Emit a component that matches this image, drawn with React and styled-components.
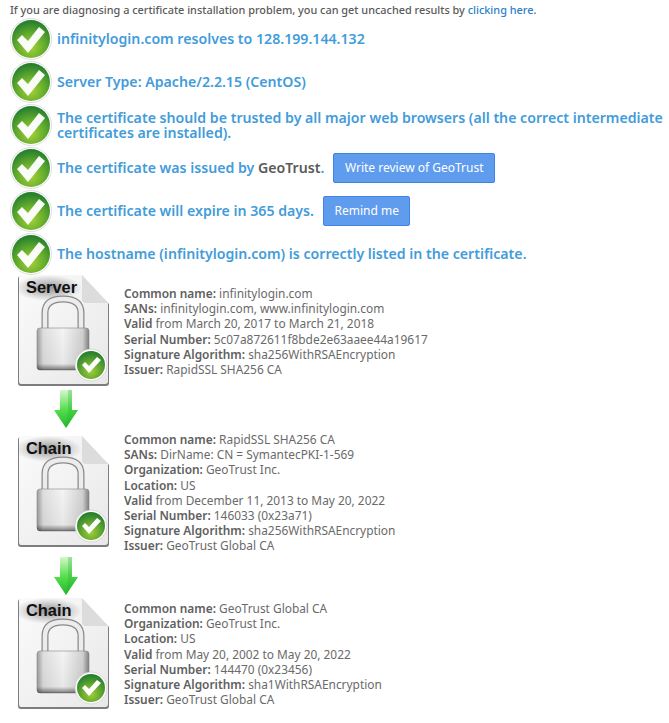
import React from 'react'
import styled, { createGlobalStyle } from 'styled-components'

const rows = [
  { id: 1, text: 'infinitylogin.com resolves to 128.199.144.132' },
  { id: 2, text: 'Server Type: Apache/2.2.15 (CentOS)' },
  { id: 3, text: 'The certificate should be trusted by all major web browsers (all the correct intermediate certificates are installed).' },
  { id: 4, text: 'The certificate was issued by ', brand: 'GeoTrust', tail: '.', button: 'Write review of GeoTrust' },
  { id: 5, text: 'The certificate will expire in 365 days.', button: 'Remind me' },
  { id: 6, text: 'The hostname (infinitylogin.com) is correctly listed in the certificate.' }
]

const certs = [
  {
    label: 'Server',
    fields: [
      ['Common name:', ' infinitylogin.com'],
      ['SANs:', ' infinitylogin.com, www.infinitylogin.com'],
      ['Valid', ' from March 20, 2017 to March 21, 2018'],
      ['Serial Number:', ' 5c07a872611f8bde2e63aaee44a19617'],
      ['Signature Algorithm:', ' sha256WithRSAEncryption'],
      ['Issuer:', ' RapidSSL SHA256 CA']
    ]
  },
  {
    label: 'Chain',
    fields: [
      ['Common name:', ' RapidSSL SHA256 CA'],
      ['SANs:', ' DirName: CN = SymantecPKI-1-569'],
      ['Organization:', ' GeoTrust Inc.'],
      ['Location:', ' US'],
      ['Valid', ' from December 11, 2013 to May 20, 2022'],
      ['Serial Number:', ' 146033 (0x23a71)'],
      ['Signature Algorithm:', ' sha256WithRSAEncryption'],
      ['Issuer:', ' GeoTrust Global CA']
    ]
  },
  {
    label: 'Chain',
    fields: [
      ['Common name:', ' GeoTrust Global CA'],
      ['Organization:', ' GeoTrust Inc.'],
      ['Location:', ' US'],
      ['Valid', ' from May 20, 2002 to May 20, 2022'],
      ['Serial Number:', ' 144470 (0x23456)'],
      ['Signature Algorithm:', ' sha1WithRSAEncryption'],
      ['Issuer:', ' GeoTrust Global CA']
    ]
  }
]

function CheckIcon ({ id }) {
  return (
    <CheckSvg viewBox='0 0 42 42'>
      <defs>
        <radialGradient id={`ball${id}`} cx='0.5' cy='0.72' r='0.68'>
          <stop offset='0' stopColor='#a5d236' />
          <stop offset='0.55' stopColor='#62ab2c' />
          <stop offset='1' stopColor='#27802e' />
        </radialGradient>
      </defs>
      <circle cx='21' cy='21' r='20.5' fill='#fff' stroke='#dedede' />
      <circle cx='21' cy='21' r='19' fill={`url(#ball${id})`} />
      <path d='M7 22L12 17L18 23L29 9L35 14L18 35Z' fill='#fff' opacity='0.96' />
    </CheckSvg>
  )
}

function CertIcon ({ id, label }) {
  return (
    <CertBox>
      <CertSvg viewBox='0 0 92 112'>
        <defs>
          <linearGradient id={`page${id}`} x1='0' y1='0' x2='1' y2='1'>
            <stop offset='0' stopColor='#fbfbfb' />
            <stop offset='1' stopColor='#e8e8e8' />
          </linearGradient>
          <linearGradient id={`lock${id}`} x1='0' y1='0' x2='1' y2='0'>
            <stop offset='0' stopColor='#9c9c9c' />
            <stop offset='0.12' stopColor='#dedede' />
            <stop offset='0.5' stopColor='#f4f4f4' />
            <stop offset='0.88' stopColor='#d0d0d0' />
            <stop offset='1' stopColor='#808080' />
          </linearGradient>
          <linearGradient id={`base${id}`} x1='0' y1='0' x2='0' y2='1'>
            <stop offset='0' stopColor='#000' stopOpacity='0' />
            <stop offset='0.85' stopColor='#000' stopOpacity='0.05' />
            <stop offset='1' stopColor='#000' stopOpacity='0.5' />
          </linearGradient>
          <radialGradient id={`badge${id}`} cx='0.5' cy='0.72' r='0.68'>
            <stop offset='0' stopColor='#a0cf34' />
            <stop offset='1' stopColor='#27802e' />
          </radialGradient>
          <radialGradient id={`shadow${id}`}>
            <stop offset='0' stopColor='#000' stopOpacity='0.4' />
            <stop offset='1' stopColor='#000' stopOpacity='0' />
          </radialGradient>
          <clipPath id={`sheet${id}`}>
            <path d='M3 0H64L90 28V106Q90 109 87 109H3Q1 109 1 106V3Q1 0 3 0Z' />
          </clipPath>
        </defs>
        <path d='M3 1H64L91 29V108Q91 111 88 111H3Q0 111 0 108V4Q0 1 3 1Z' fill='#7d7d7d' />
        <path d='M3 0H64L90 28V106Q90 109 87 109H3Q1 109 1 106V3Q1 0 3 0Z' fill={`url(#page${id})`} />
        <g clipPath={`url(#sheet${id})`}>
          <ellipse cx='30' cy='13' rx='34' ry='13' fill={`url(#shadow${id})`} />
        </g>
        <path d='M64 0L90 28H68Q64 28 64 24Z' fill='#dcdcdc' />
        <path d='M27 56V38Q27 24 45 24Q63 24 63 38V56' fill='none' stroke='#8a8a8a' strokeWidth='7' />
        <path d='M27 56V38Q27 24 45 24Q63 24 63 38V56' fill='none' stroke='#ececec' strokeWidth='4.5' />
        <rect x='19' y='53' width='52' height='42' rx='3' fill={`url(#lock${id})`} stroke='#888' strokeWidth='0.6' />
        <rect x='19' y='53' width='52' height='42' rx='3' fill={`url(#base${id})`} />
        <circle cx='73' cy='90' r='16' fill='#fff' stroke='#bbb' strokeWidth='0.5' />
        <circle cx='73' cy='90' r='14' fill={`url(#badge${id})`} />
        <path d='M64 90L67 87L71 91L79 82L83 85L71 98Z' fill='#fff' />
      </CertSvg>
      <CertLabel>{label}</CertLabel>
    </CertBox>
  )
}

function ArrowIcon ({ id }) {
  return (
    <ArrowSvg viewBox='0 0 24 38'>
      <defs>
        <linearGradient id={`arrow${id}`} x1='0' y1='0' x2='0' y2='1'>
          <stop offset='0' stopColor='#d6f7cc' />
          <stop offset='0.5' stopColor='#58e04f' />
          <stop offset='1' stopColor='#21b62b' />
        </linearGradient>
      </defs>
      <path d='M6 0H18V20H24L12 38L0 20H6Z' fill={`url(#arrow${id})`} />
      <path d='M14 0H18V20H24L12 38L14 20Z' fill='#1fae2a' opacity='0.3' />
    </ArrowSvg>
  )
}

export default function App () {
  return (
    <Page>
      <GlobalStyle />
      <Intro>
        If you are diagnosing a certificate installation problem, you can get uncached results by <IntroLink>clicking here</IntroLink>.
      </Intro>
      {rows.map(row => (
        <CheckRow key={row.id}>
          <CheckIcon id={row.id} />
          <RowText>
            {row.text}
            {row.brand && <Brand>{row.brand}</Brand>}
            {row.tail}
          </RowText>
          {row.button && <Button>{row.button}</Button>}
        </CheckRow>
      ))}
      <Chain>
        {certs.map((cert, i) => (
          <React.Fragment key={i}>
            <CertRow>
              <CertIcon id={i} label={cert.label} />
              <Details>
                {cert.fields.map(([name, value]) => (
                  <div key={name}><FieldName>{name}</FieldName>{value}</div>
                ))}
              </Details>
            </CertRow>
            {i < certs.length - 1 && (
              <ArrowCell>
                <ArrowIcon id={i} />
              </ArrowCell>
            )}
          </React.Fragment>
        ))}
      </Chain>
    </Page>
  )
}

const GlobalStyle = createGlobalStyle`
  html, body {
    margin: 0;
    padding: 0;
    background: #fff;
  }
`

const Page = styled.div`
  width: 669px;
  padding: 2px 0 0 10px;
  box-sizing: border-box;
  overflow: hidden;
  font-family: 'Noto Sans', 'Open Sans', sans-serif;
  color: #5a5a5a;
`

const Intro = styled.div`
  font-size: 10.9px;
  line-height: 15px;
  font-weight: 500;
  white-space: nowrap;
`

const IntroLink = styled.a`
  color: #2a7fc9;
`

const CheckRow = styled.div`
  display: flex;
  align-items: center;
  min-height: 43px;
`

const CheckSvg = styled.svg`
  flex: none;
  width: 42px;
  height: 42px;
  margin-right: 5px;
`

const RowText = styled.div`
  font-size: 14.15px;
  line-height: 15px;
  font-weight: 600;
  color: #439cda;
  flex: 0 1 auto;
`

const Brand = styled.span`
  color: #5a5a5a;
`

const Button = styled.button`
  flex: none;
  height: 30px;
  margin-left: 9px;
  padding: 0 10.5px;
  font-family: inherit;
  font-size: 12px;
  color: #fff;
  background: #5f9cee;
  border: 1px solid #3f83e6;
  border-radius: 2px;
`

const Chain = styled.div`
  padding-left: 8px;
`

const CertRow = styled.div`
  display: flex;
  align-items: center;
  gap: 14px;
`

const CertBox = styled.div`
  position: relative;
  flex: none;
  width: 92px;
  height: 112px;
`

const CertSvg = styled.svg`
  display: block;
  width: 92px;
  height: 112px;
`

const CertLabel = styled.span`
  position: absolute;
  left: 8px;
  top: 2px;
  font-family: 'Liberation Sans', Arial, sans-serif;
  font-size: 16.4px;
  line-height: 20px;
  font-weight: 700;
  color: #111;
`

const Details = styled.div`
  padding-top: 1px;
  font-size: 11.9px;
  line-height: 15.2px;
  color: #6a6a6a;
  white-space: nowrap;
`

const FieldName = styled.b`
  font-weight: 600;
  color: #606060;
`

const ArrowCell = styled.div`
  width: 96px;
  height: 44px;
  display: flex;
  justify-content: center;
  align-items: center;
`

const ArrowSvg = styled.svg`
  width: 24px;
  height: 38px;
`
